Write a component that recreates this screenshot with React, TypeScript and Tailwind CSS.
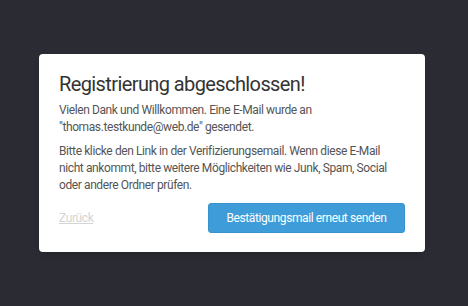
export default function App() {
  return (
    <div
      className="w-[468px] h-[306px] bg-[#2b2b33] pt-[54px] pl-[39px]"
      style={{ fontFamily: 'Roboto, "Noto Sans", sans-serif' }}
    >
      <div className="w-[386px] h-[198px] bg-white rounded-[4px] shadow-md px-5 pt-[16px] whitespace-nowrap">
        <h1 className="text-[20px] leading-[28px] tracking-[-0.6px] text-[#333]">
          Registrierung abgeschlossen!
        </h1>
        <p className="mt-[4px] text-[12px] leading-[17px] tracking-[-0.4px] text-[#555]">
          Vielen Dank und Willkommen. Eine E-Mail wurde an
          <br />
          "thomas.testkunde@web.de" gesendet.
        </p>
        <p className="mt-[7px] text-[12px] leading-[17px] tracking-[-0.4px] text-[#555]">
          Bitte klicke den Link in der Verifizierungsemail. Wenn diese E-Mail
          <br />
          nicht ankommt, bitte weitere Möglichkeiten wie Junk, Spam, Social
          <br />
          oder andere Ordner prüfen.
        </p>
        <div className="mt-[9px] flex items-center justify-between">
          <a className="text-[12px] tracking-[-0.4px] text-[#d4d4d4] underline">Zurück</a>
          <button className="h-[30px] w-[197px] rounded-[3px] bg-[#3e9cd9] border border-[#3a92cc] text-white text-[12px] tracking-[-0.4px]">
            Bestätigungsmail erneut senden
          </button>
        </div>
      </div>
    </div>
  );
}
